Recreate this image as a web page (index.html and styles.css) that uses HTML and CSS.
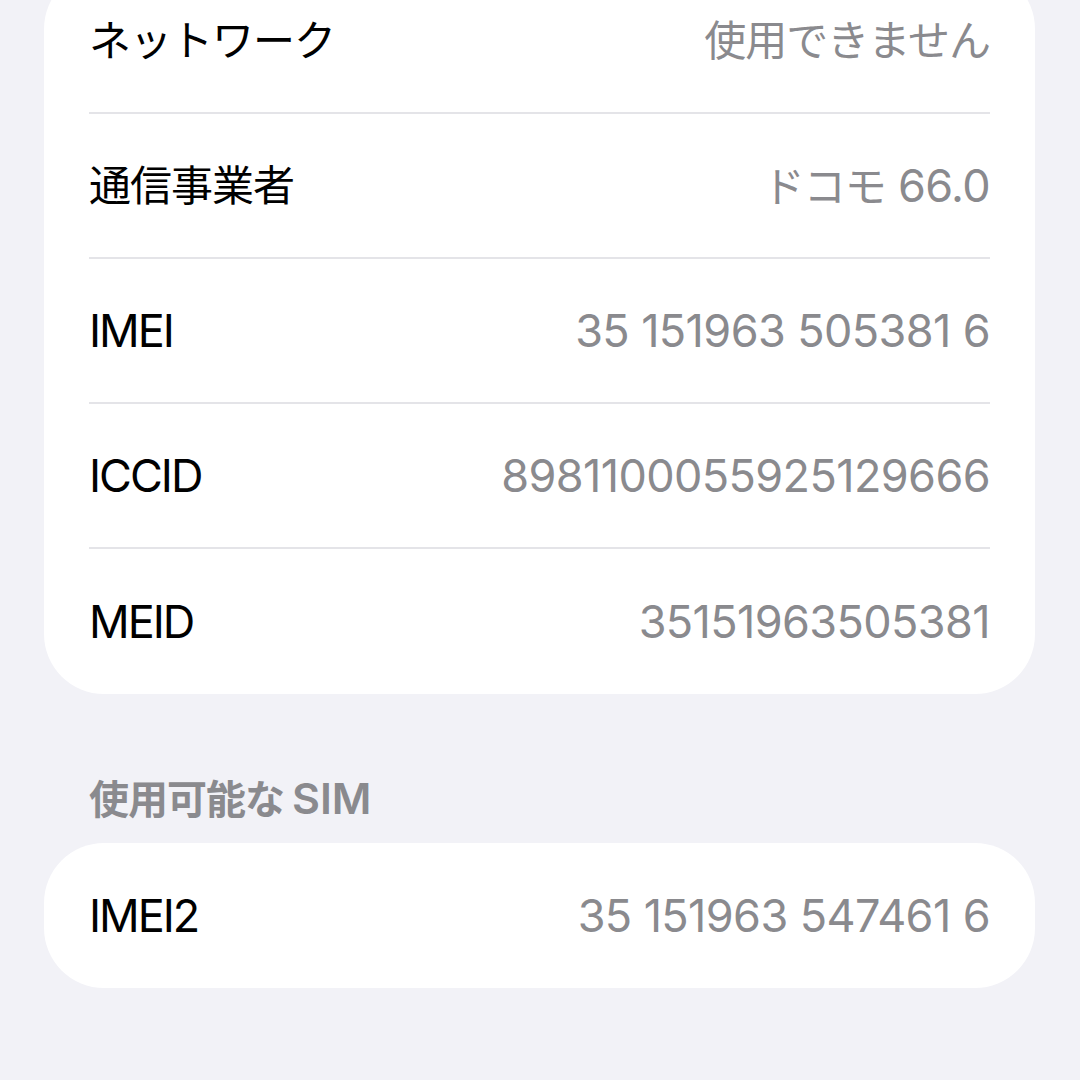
FILE: index.html
```html
<!DOCTYPE html>
<html lang="ja">
<head>
  <meta charset="UTF-8">
  <meta name="viewport" content="width=device-width, initial-scale=1.0">
  <title>情報</title>
  <link rel="stylesheet" href="styles.css">
</head>
<body>
  <main class="page">
    <section class="card first">
      <div class="row">
        <span class="label ja">ネットワーク</span>
        <span class="value ja">使用できません</span>
      </div>
      <div class="row">
        <span class="label ja">通信事業者</span>
        <span class="value"><span class="ja">ドコモ</span> 66.0</span>
      </div>
      <div class="row">
        <span class="label">IMEI</span>
        <span class="value">35 151963 505381 6</span>
      </div>
      <div class="row">
        <span class="label">ICCID</span>
        <span class="value">8981100055925129666</span>
      </div>
      <div class="row">
        <span class="label">MEID</span>
        <span class="value">35151963505381</span>
      </div>
    </section>

    <h2 class="section-title"><span class="ja">使用可能な</span>SIM</h2>

    <section class="card">
      <div class="row">
        <span class="label">IMEI2</span>
        <span class="value">35 151963 547461 6</span>
      </div>
    </section>
  </main>
</body>
</html>
```

FILE: styles.css
```css
body {
  margin: 0;
  background-color: #f2f2f7;
  font-family: Inter, "Noto Sans CJK JP", sans-serif;
  color: #000;
  overflow: hidden;
}
.page {
  padding: 0 45px 0 44px;
}
.card {
  background-color: #fff;
  border-radius: 60px;
  padding: 0 45px;
}
.card.first {
  margin-top: -31px;
}
.row {
  height: 145px;
  box-sizing: border-box;
  display: flex;
  justify-content: space-between;
  align-items: center;
  border-bottom: 2px solid #e4e4e8;
}
.row:last-child {
  border-bottom: none;
}
.label,
.value {
  font-size: 45px;
  line-height: 1;
}
.label {
  letter-spacing: -2px;
}
.value {
  color: #8a8a8e;
  letter-spacing: -0.6px;
}
.ja {
  font-size: 42px;
  letter-spacing: -1px;
}
.section-title {
  margin: 79px 0 18px 45px;
  font-size: 43px;
  line-height: 50px;
  font-weight: 600;
  color: #8a8a8e;
}
.section-title .ja {
  font-size: 40px;
  margin-right: 8px;
}
```
